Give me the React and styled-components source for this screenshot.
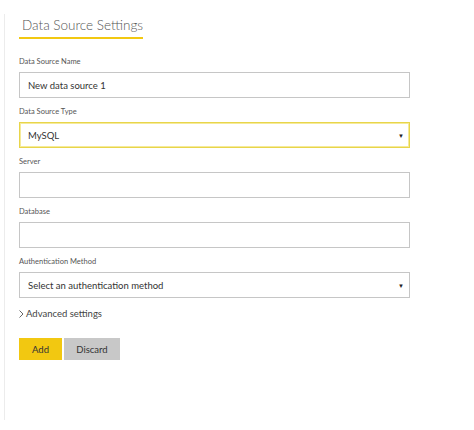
import React from 'react';
import styled, { createGlobalStyle } from 'styled-components';

const GlobalStyle = createGlobalStyle`
  html, body {
    margin: 0;
    padding: 0;
    background: #fff;
    font-family: Lato, "Open Sans", sans-serif;
  }
`;

const Page = styled.div`
  width: 474px;
  height: 430px;
  padding: 14px 0 10px 4px;
  box-sizing: border-box;
`;

const Panel = styled.div`
  height: 100%;
  border-left: 1px solid #ececec;
  padding: 2px 0 0 14px;
  box-sizing: border-box;
  width: 406px;
`;

const Title = styled.h1`
  width: 124px;
  box-sizing: border-box;
  white-space: nowrap;
  margin: 0;
  padding: 0 0 3px 3px;
  font-size: 13.5px;
  font-weight: 300;
  color: #555;
  line-height: 18px;
  border-bottom: 2px solid #f2c811;
`;

const Form = styled.div`
  margin-top: 18px;
`;

const Field = styled.div`
  margin-bottom: 9px;
`;

const Label = styled.div`
  font-size: 7.5px;
  color: #555;
  line-height: 10px;
  margin-bottom: 5px;
`;

const Box = styled.div`
  position: relative;
  height: 26px;
  box-sizing: border-box;
  border: 1px solid ${p => (p.$active ? '#e8d54a' : '#c6c6c6')};
  box-shadow: ${p => (p.$active ? 'inset 0 0 0 1px #f5ea9a' : 'none')};
  display: flex;
  align-items: center;
  padding-left: 8px;
  font-size: 9.5px;
  color: #333;
`;

const Arrow = styled.span`
  position: absolute;
  right: 5px;
  top: 9px;
  font-size: 6px;
  color: #222;
`;

const Advanced = styled.div`
  font-size: 9.5px;
  color: #444;
  line-height: 14px;
  display: flex;
  align-items: center;
  gap: 2px;
`;

const Buttons = styled.div`
  display: flex;
  gap: 2px;
  margin-top: 17px;
`;

const Button = styled.div`
  height: 22px;
  width: ${p => p.$w}px;
  background: ${p => p.$bg};
  color: #333;
  font-size: 9.5px;
  display: flex;
  align-items: center;
  justify-content: center;
`;

const fields = [
  { label: 'Data Source Name', value: 'New data source 1' },
  { label: 'Data Source Type', value: 'MySQL', select: true, active: true },
  { label: 'Server', value: '' },
  { label: 'Database', value: '' },
  { label: 'Authentication Method', value: 'Select an authentication method', select: true },
];

export default function App() {
  return (
    <>
      <GlobalStyle />
      <Page>
        <Panel>
          <Title>Data Source Settings</Title>
          <Form>
            {fields.map(f => (
              <Field key={f.label}>
                <Label>{f.label}</Label>
                <Box $active={f.active}>
                  {f.value}
                  {f.select && <Arrow>▼</Arrow>}
                </Box>
              </Field>
            ))}
            <Advanced>
              <svg width="5" height="8" viewBox="0 0 5 8">
                <path d="M0.5 0.5 L4 4 L0.5 7.5" fill="none" stroke="#555" strokeWidth="0.9" />
              </svg>
              Advanced settings
            </Advanced>
            <Buttons>
              <Button $w={43} $bg="#f2c811">Add</Button>
              <Button $w={56} $bg="#c8c8c8">Discard</Button>
            </Buttons>
          </Form>
        </Panel>
      </Page>
    </>
  );
}
